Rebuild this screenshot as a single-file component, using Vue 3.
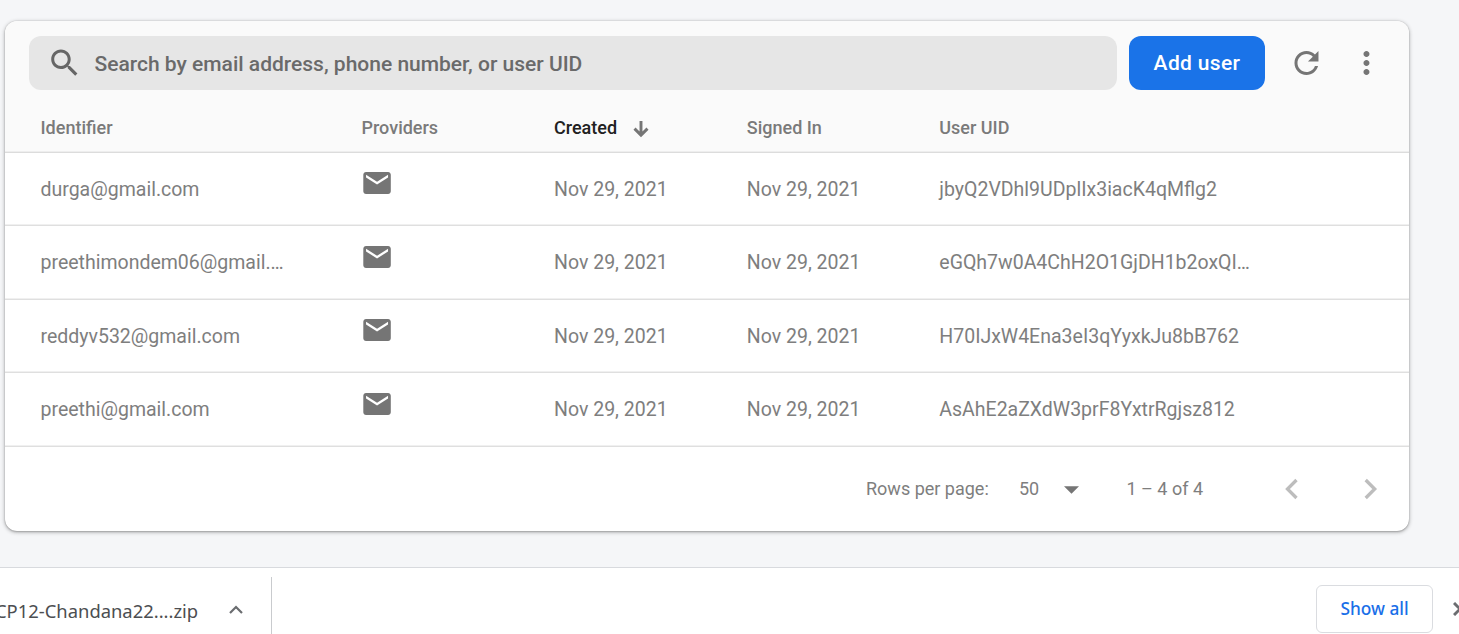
<script setup>
const rows = [
  { id: 'durga@gmail.com', uid: 'jbyQ2VDhl9UDplIx3iacK4qMflg2' },
  { id: 'preethimondem06@gmail.…', uid: 'eGQh7w0A4ChH2O1GjDH1b2oxQI…' },
  { id: 'reddyv532@gmail.com', uid: 'H70IJxW4Ena3eI3qYyxkJu8bB762' },
  { id: 'preethi@gmail.com', uid: 'AsAhE2aZXdW3prF8YxtrRgjsz812' },
]
const date = 'Nov 29, 2021'
</script>

<template>
  <div class="page">
    <section class="card">
      <div class="head">
        <div class="toolbar">
          <div class="search">
            <svg class="search-icon" viewBox="0.2 0 24 24"><path d="M15.5 14h-.79l-.28-.27C15.41 12.59 16 11.11 16 9.5 16 5.91 13.09 3 9.5 3S3 5.91 3 9.5 5.91 16 9.5 16c1.61 0 3.09-.59 4.23-1.57l.27.28v.79l5 4.99L20.49 19l-4.99-5zm-6 0C7.01 14 5 11.99 5 9.5S7.01 5 9.5 5 14 7.01 14 9.5 11.99 14 9.5 14z"/></svg>
            <span class="search-text">Search by email address, phone number, or user UID</span>
          </div>
          <button class="add">Add user</button>
          <svg class="tool" viewBox="0.35 0 24 24"><path d="M17.65 6.35C16.2 4.9 14.21 4 12 4c-4.42 0-7.99 3.58-7.99 8s3.57 8 7.99 8c3.73 0 6.84-2.55 7.73-6h-2.08c-.82 2.33-3.04 4-5.65 4-3.31 0-6-2.69-6-6s2.69-6 6-6c1.66 0 3.14.69 4.22 1.78L13 11h7V4l-2.35 2.35z"/></svg>
          <svg class="tool" viewBox="0.35 0 24 24"><path d="M12 8c1.1 0 2-.9 2-2s-.9-2-2-2-2 .9-2 2 .9 2 2 2zm0 2c-1.1 0-2 .9-2 2s.9 2 2 2 2-.9 2-2-.9-2-2-2zm0 6c-1.1 0-2 .9-2 2s.9 2 2 2 2-.9 2-2-.9-2-2-2z"/></svg>
        </div>
        <div class="cols labels">
          <span>Identifier</span>
          <span>Providers</span>
          <span class="sorted">Created
            <svg viewBox="0 0 16 18"><path d="M8 1v14M1.500 8.600 8 15.100l6.500-6.500" fill="none" stroke="#757575" stroke-width="2.900"/></svg>
          </span>
          <span>Signed In</span>
          <span>User UID</span>
        </div>
      </div>
      <div v-for="row in rows" :key="row.id" class="cols row">
        <span>{{ row.id }}</span>
        <span class="provider"><svg viewBox="-0.4 0.35 24 24"><path d="M20 4H4c-1.100 0-1.990.9-1.990 2L2 18c0 1.100.9 2 2 2h16c1.100 0 2-.9 2-2V6c0-1.100-.9-2-2-2zm0 4l-8 5-8-5V6l8 5 8-5v2z"/></svg></span>
        <span>{{ date }}</span>
        <span>{{ date }}</span>
        <span>{{ row.uid }}</span>
      </div>
      <div class="pager">
        <span class="rpp">Rows per page:</span>
        <span class="size">50</span>
        <svg class="caret" viewBox="0 0 16 8"><path d="M0 0h16L8 8z"/></svg>
        <span class="range">1 – 4 of 4</span>
        <svg class="nav" viewBox="0.5 0 14 22"><path d="M12 2 3 11l9 9"/></svg>
        <svg class="nav next" viewBox="0.3 0 14 22"><path d="M2 2l9 9-9 9"/></svg>
      </div>
    </section>
    <footer class="shelf">
      <div class="download">
        <span class="file">CP12-Chandana22....zip</span>
        <svg class="up" viewBox="0 0 14 9"><path d="M1 8l6-6 6 6"/></svg>
      </div>
      <div class="actions">
        <button class="show">Show all</button>
        <svg class="close" viewBox="0 0 14 14"><path d="M1 1l12 12M13 1 1 13"/></svg>
      </div>
    </footer>
  </div>
</template>

<style>
body { margin: 0; overflow: hidden; }
</style>

<style scoped>
.page {
  box-sizing: border-box;
  width: 1459px;
  height: 634px;
  padding-top: 21px;
  overflow: hidden;
  display: flex;
  flex-direction: column;
  background: #f5f6f8;
  font-family: Roboto, "Liberation Sans", sans-serif;
  color: #757575;
}
svg { display: block; fill: #757575; flex: none; }
button { font-family: inherit; padding: 0; border: 0; }
.card {
  width: 1404px;
  height: 510px;
  margin-left: 5px;
  border-radius: 12px;
  background: #fff;
  box-shadow: 0 0 1px rgba(0, 0, 0, .25), 0 1px 4px rgba(0, 0, 0, .32), 0 1px 2px rgba(0, 0, 0, .14);
  flex: none;
}
.head {
  box-sizing: border-box;
  height: 132px;
  border-radius: 12px 12px 0 0;
  background: #fafafa;
  border-bottom: 1px solid #dcdcdc;
  box-shadow: inset 0 -1px #eee;
  padding-top: 15px;
}
.toolbar { display: flex; align-items: center; height: 54px; padding-left: 24px; }
.search {
  display: flex;
  align-items: center;
  width: 1088px;
  height: 54px;
  border-radius: 12px;
  background: #e6e6e6;
}
.search-icon { width: 36px; height: 36px; margin-left: 17.500px; fill: #666; }
.search-text { margin-left: 12px; padding-top: 2px; font-size: 21px; font-weight: 500; color: #6a6a6a; white-space: nowrap; }
.add {
  width: 136px;
  height: 54px;
  margin-left: 12px;
  border-radius: 12px;
  background: #1a73e8;
  color: #fff;
  font-size: 21px;
  font-weight: 500;
  letter-spacing: .35px;
}
.tool { width: 36px; height: 36px; margin-left: 24px; }
.cols {
  display: grid;
  grid-template-columns: 321px 192.500px 192.800px 192.500px 1fr;
  align-items: center;
  padding-left: 35.500px;
  white-space: nowrap;
}
.labels { height: 46px; margin-top: 14px; font-size: 18px; font-weight: 500; color: #7a7a7a; }
.sorted { display: flex; align-items: center; color: #212121; }
.sorted svg { width: 16px; height: 18px; margin-left: 16px; margin-top: 3px; }
.row {
  box-sizing: border-box;
  height: 73px;
  border-bottom: 1px solid #dfdfdf;
  box-shadow: inset 0 -1px #f0f0f0;
  font-size: 19.500px;
  color: #7e7e7e;
}
.row:nth-child(odd) { height: 74px; }
.provider svg { width: 33px; height: 33px; margin: -11px 0 0 -1.500px; }
.pager {
  display: flex;
  align-items: center;
  height: 84px;
  padding-left: 861px;
  font-size: 18px;
  color: #7e7e7e;
  white-space: nowrap;
}
.pager span { margin-top: -2px; }
.rpp { width: 153px; }
.size { width: 45px; }
.caret { width: 15px; height: 8px; margin-top: 1px; }
.range { margin-left: 47.500px; width: 158px; }
.nav { width: 14px; height: 22px; fill: none; stroke: #bdbdbd; stroke-width: 3.300; }
.next { margin-left: 65px; }
.shelf {
  box-sizing: border-box;
  display: flex;
  justify-content: space-between;
  flex: none;
  height: 67px;
  margin-top: 36px;
  border-top: 1px solid #d8dade;
  background: #fff;
  font-family: "Noto Sans", "Open Sans", sans-serif;
}
.download {
  box-sizing: border-box;
  display: flex;
  align-items: center;
  width: 272px;
  height: 66px;
  margin-top: 9px;
  border-right: 1px solid #c9cbce;
}
.file { width: 229px; margin-left: -5px; font-size: 18.400px; color: #4c4e51; white-space: nowrap; }
.up { width: 14px; height: 9px; margin: -2px 0 0 5px; fill: none; stroke: #6b6d70; stroke-width: 2.200; }
.actions { display: flex; width: 143px; margin-top: 17px; }
.show {
  box-sizing: border-box;
  flex: none;
  width: 117px;
  height: 48px;
  border: 1px solid #dadce0;
  border-radius: 6px;
  background: #fff;
  color: #1a6fe8;
  font-size: 17.300px;
  font-weight: 500;
  padding-bottom: 1px;
}
.close { width: 14px; height: 14px; margin: 17px 0 0 20px; fill: none; stroke: #6b6d70; stroke-width: 3; }
</style>
